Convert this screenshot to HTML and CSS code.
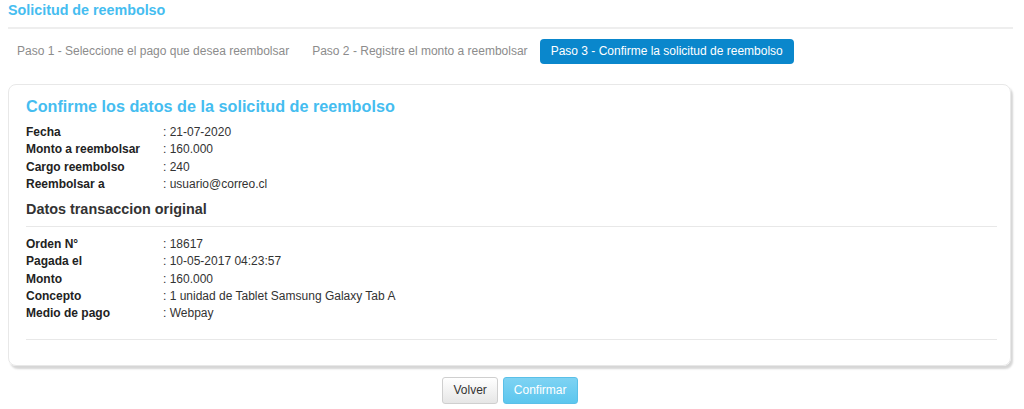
FILE: index.html
```html
<!DOCTYPE html>
<html lang="es">
<head>
<meta charset="utf-8">
<title>Solicitud de reembolso</title>
<link rel="stylesheet" href="styles.css">
</head>
<body>
<div class="page">
  <h1 class="page-title">Solicitud de reembolso</h1>
  <ul class="steps">
    <li class="step">Paso 1 - Seleccione el pago que desea reembolsar</li>
    <li class="step">Paso 2 - Registre el monto a reembolsar</li>
    <li class="step active">Paso 3 - Confirme la solicitud de reembolso</li>
  </ul>
  <div class="card">
    <h2 class="card-title">Confirme los datos de la solicitud de reembolso</h2>
    <dl class="data">
      <dt>Fecha</dt><dd>: 21-07-2020</dd>
      <dt>Monto a reembolsar</dt><dd>: 160.000</dd>
      <dt>Cargo reembolso</dt><dd>: 240</dd>
      <dt>Reembolsar a</dt><dd>: usuario@correo.cl</dd>
    </dl>
    <h3 class="section-title">Datos transaccion original</h3>
    <hr class="sep">
    <dl class="data">
      <dt>Orden N°</dt><dd>: 18617</dd>
      <dt>Pagada el</dt><dd>: 10-05-2017 04:23:57</dd>
      <dt>Monto</dt><dd>: 160.000</dd>
      <dt>Concepto</dt><dd>: 1 unidad de Tablet Samsung Galaxy Tab A</dd>
      <dt>Medio de pago</dt><dd>: Webpay</dd>
    </dl>
    <hr class="sep sep-bottom">
  </div>
  <div class="actions">
    <button class="btn btn-default" type="button">Volver</button>
    <button class="btn btn-primary" type="button" disabled>Confirmar</button>
  </div>
</div>
</body>
</html>
```

FILE: styles.css
```css
* { box-sizing: border-box; }
html, body { margin: 0; padding: 0; background: #fff; }
body {
  font-family: "Liberation Sans", Arial, sans-serif;
  font-size: 12px;
  color: #333;
}
.page {
  padding: 0 8px 0 8px;
}
.page-title {
  margin: 0 3px 0 0;
  padding: 2px 0 0 0;
  height: 29px;
  font-size: 14.3px;
  line-height: 17px;
  font-weight: bold;
  color: #45bdf0;
  border-bottom: 2px solid #eeeeee;
}
.steps {
  list-style: none;
  margin: 10px 0 0 -2px;
  padding: 0;
  display: flex;
  height: 25px;
}
.step {
  padding: 0 11px;
  line-height: 25px;
  color: #8c8c8c;
  font-size: 12px;
  border-radius: 4px;
  margin-right: 1px;
}
.step.active {
  background: #0a87cc;
  color: #fff;
}
.card {
  margin-top: 20px;
  border: 1px solid #e8e8e8;
  border-radius: 8px;
  box-shadow: 2px 3px 2px #d6d6d6;
  padding: 11px 13px 25px 17px;
  margin-right: 5px;
}
.card-title {
  margin: 0 0 8px 0;
  font-size: 16.2px;
  line-height: 20px;
  font-weight: bold;
  color: #45bdf0;
}
.data {
  margin: 0;
  display: grid;
  grid-template-columns: 137px 1fr;
  line-height: 17.3px;
}
.data dt { font-weight: bold; color: #222; }
.data dd { margin: 0; color: #333; }
.section-title {
  margin: 6px 0 0 0;
  font-size: 14.4px;
  line-height: 20px;
  font-weight: bold;
  color: #333;
}
.sep {
  border: 0;
  border-top: 1px solid #e8e8e8;
  margin: 7px 0 9px 0;
}
.sep-bottom {
  margin: 16px 0 0 0;
}
.actions {
  display: flex;
  justify-content: center;
  gap: 5px;
  margin-top: 11px;
  padding-right: 4px;
}
.btn {
  font-family: "Liberation Sans", Arial, sans-serif;
  font-size: 12px;
  height: 27px;
  padding: 0 10px;
  border-radius: 3px;
  border: 1px solid #ccc;
  cursor: pointer;
}
.btn-default {
  background: linear-gradient(#ffffff, #e6e6e6);
  color: #333;
  border-color: #cfcfcf;
}
.btn-primary {
  background: linear-gradient(#7ed3f3, #5cc6ee);
  border-color: #5ac0e8;
  color: #fff;
  opacity: 1;
}
```
